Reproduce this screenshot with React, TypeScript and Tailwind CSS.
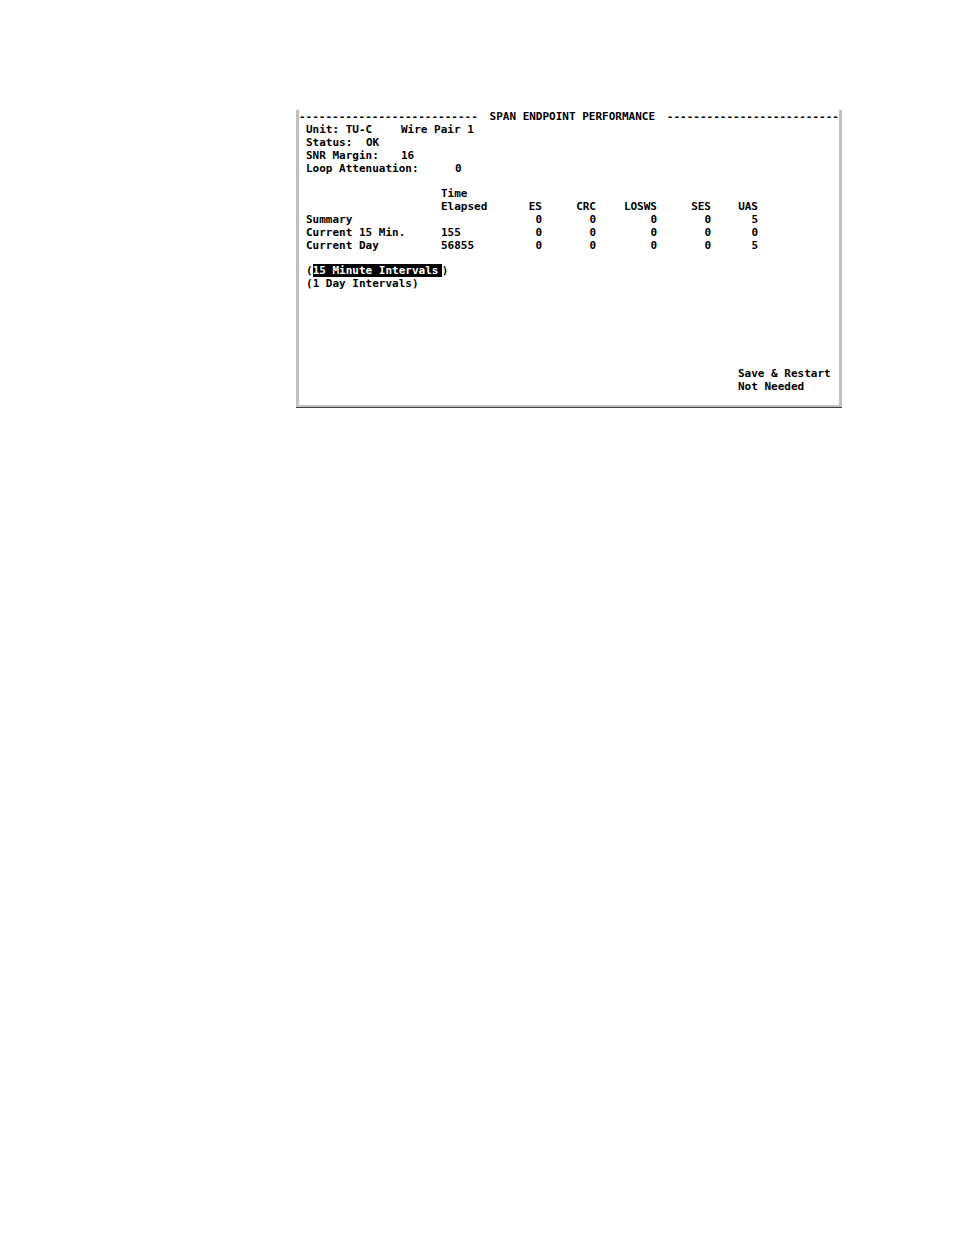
import React from "react";

const columns = ["ES", "CRC", "LOSWS", "SES", "UAS"];

const rows = [
  { name: "Summary", elapsed: "", values: [0, 0, 0, 0, 5] },
  { name: "Current 15 Min.", elapsed: "155", values: [0, 0, 0, 0, 0] },
  { name: "Current Day", elapsed: "56855", values: [0, 0, 0, 0, 5] },
];

const App: React.FC = () => {
  return (
    <main className="min-h-screen bg-white pt-[110px] pl-[296px] pr-[112px]">
      <section
        className="
          border-b border-[#404040] bg-white text-black whitespace-nowrap
          font-['DejaVu_Sans_Mono','Liberation_Mono',monospace] text-[11px] leading-[13px] font-bold
        "
      >
        <div className="border-x-3 border-b-2 border-[#c0c0c0] pb-[12px]">
          <header className="flex justify-between">
            <span aria-hidden="true">{"-".repeat(27)}</span>
            <h1>SPAN ENDPOINT PERFORMANCE</h1>
            <span aria-hidden="true">{"-".repeat(26)}</span>
          </header>

          <div className="px-[7px]">
            <div className="flex">
              <span className="w-[95px]">Unit: TU-C</span>
              <span>Wire Pair 1</span>
            </div>
            <div className="flex">
              <span className="w-[60px]">Status:</span>
              <span>OK</span>
            </div>
            <div className="flex">
              <span className="w-[95px]">SNR Margin:</span>
              <span>16</span>
            </div>
            <div className="flex">
              <span className="w-[149px]">Loop Attenuation:</span>
              <span>0</span>
            </div>

            <table className="mt-[12px] w-[452px] table-fixed text-right">
              <colgroup>
                <col className="w-[135px]" />
                <col className="w-[48px]" />
                <col className="w-[53px]" />
                <col className="w-[54px]" />
                <col className="w-[61px]" />
                <col className="w-[54px]" />
                <col className="w-[47px]" />
              </colgroup>
              <thead className="align-bottom">
                <tr>
                  <td></td>
                  <th className="text-left">
                    Time
                    <br />
                    Elapsed
                  </th>
                  {columns.map((column) => (
                    <th key={column}>{column}</th>
                  ))}
                </tr>
              </thead>
              <tbody>
                {rows.map((row) => (
                  <tr key={row.name}>
                    <th className="text-left">{row.name}</th>
                    <td className="text-left">{row.elapsed}</td>
                    {row.values.map((value, i) => (
                      <td key={columns[i]}>{value}</td>
                    ))}
                  </tr>
                ))}
              </tbody>
            </table>

            <div className="mt-[12px] flex">
              (
              <button className="w-[129px] bg-black text-left text-white">
                15 Minute Intervals
              </button>
              )
            </div>
            <div className="flex">
              (<button>1 Day Intervals</button>)
            </div>

            <p className="mt-[77px] ml-auto w-[94px]">
              Save &amp; Restart
              <br />
              Not Needed
            </p>
          </div>
        </div>
      </section>
    </main>
  );
};

export default App;
